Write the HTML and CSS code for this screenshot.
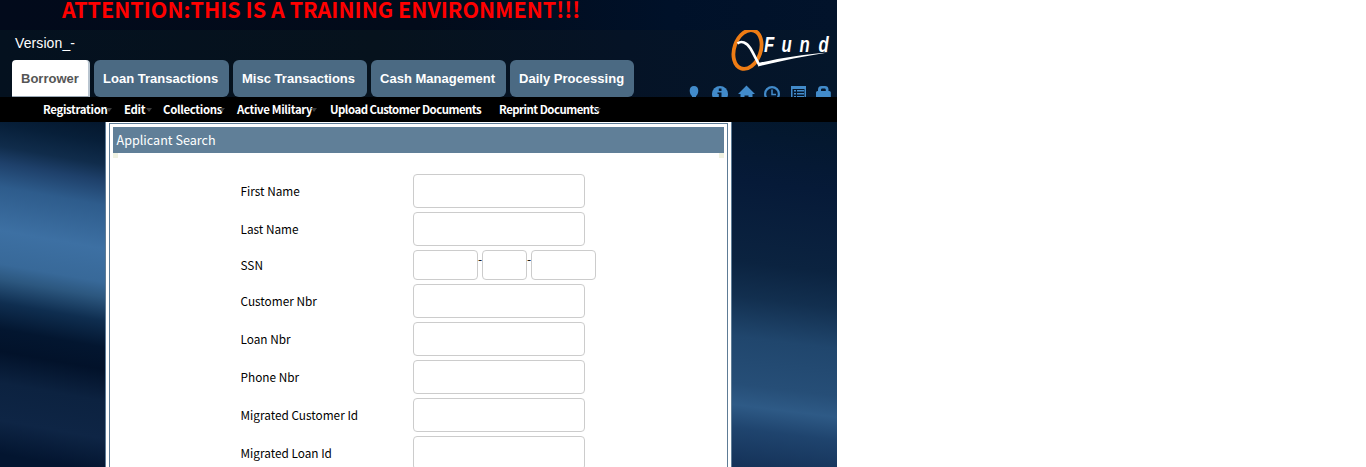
FILE: index.html
```html
<!DOCTYPE html>
<html lang="en">
<head>
<meta charset="utf-8">
<title>QFund</title>
<link rel="stylesheet" href="styles.css">
</head>
<body>
<div class="app">
  <div class="notice"><span class="notice-text">ATTENTION:THIS IS A TRAINING ENVIRONMENT!!!</span></div>
  <header class="header">
    <div class="header-left">
      <div class="version">Version_-</div>
      <nav class="tabs">
        <a class="tab tab-borrower active">Borrower</a>
        <a class="tab tab-loan">Loan Transactions</a>
        <a class="tab tab-misc">Misc Transactions</a>
        <a class="tab tab-cash">Cash Management</a>
        <a class="tab tab-daily">Daily Processing</a>
      </nav>
    </div>
    <svg class="brand" width="157" height="67" viewBox="680 30 157 67">
      <ellipse cx="747.5" cy="49.5" rx="13.2" ry="20" transform="rotate(19 747.5 49.5)" fill="none" stroke="#ee7c14" stroke-width="3.8"/>
      <path d="M737.500 43.500C741.500 40.500 746.500 42.200 750.500 48.500C754 54.500 756.500 60 759.300 65" fill="none" stroke="#fff" stroke-width="2.600"/>
      <path d="M758.500 63C780 58 802 54.500 828 52.400C802 56.300 780 61 758 66.400Z" fill="#fff"/>
      <g class="brand-text">
        <text transform="translate(764 52) scale(.76 1)">F</text>
        <text transform="translate(781.500 52) scale(.76 1)">u</text>
        <text transform="translate(799.500 52) scale(.76 1)">n</text>
        <text transform="translate(818.500 52) scale(.76 1)">d</text>
      </g>
      <g fill="#428bca">
        <path d="M694 86c2.800 0 4.300 2 4.300 4.800 0 2.700-1.300 4.500-2.300 5.400V97h-4v-.8c-1-.9-2.300-2.700-2.300-5.400 0-2.800 1.500-4.800 4.300-4.800Z"/>
        <circle cx="720" cy="94" r="8"/>
        <path d="M746.500 85.500 755 94h-2.500v3h-4v-1.500h-4V97h-4v-3H738Z"/>
        <path fill-rule="evenodd" d="M791 86h15v11h-15ZM792.500 89v8h12v-8Z"/>
        <path d="M794 90h2v1.500h-2Zm3 0h7v1.500h-7Zm-3 3h2v1.500h-2Zm3 0h7v1.500h-7Zm-3 3h2v1h-2Zm3 0h7v1h-7Z"/>
        <path fill-rule="evenodd" d="M816 92.500q0-1.500 1.500-1.500h.5V89.500c0-2.500 1.500-3.500 3.500-3.500h3.500c2 0 3.500 1 3.500 3.500V91h.8q1.500 0 1.500 1.500V97H816Zm5-1.500h4.800v-1c0-1-.5-1.500-1.200-1.500h-2.400c-.7 0-1.200.5-1.200 1.500Z"/>
      </g>
      <path d="M718.800 88.500h2.700V91h-2.700ZM717.500 92.500h4V97h-2.700v-3h-1.300Z" fill="#04152a"/>
      <circle cx="772" cy="94" r="6.900" fill="none" stroke="#428bca" stroke-width="2.200"/>
      <path d="M772 89.500V94.500h4" fill="none" stroke="#428bca" stroke-width="1.500"/>
    </svg>
  </header>
  <nav class="menu">
    <a class="menu-item m-reg has-arrow">Registration</a>
    <a class="menu-item m-edit has-arrow">Edit</a>
    <a class="menu-item m-coll has-arrow">Collections</a>
    <a class="menu-item m-mil has-arrow">Active Military</a>
    <a class="menu-item m-upload">Upload Customer Documents</a>
    <a class="menu-item m-reprint has-arrow">Reprint Documents</a>
  </nav>
  <main class="content">
    <div class="side side-left"></div>
    <div class="panel-outer">
      <section class="panel">
        <h1 class="panel-title">Applicant Search</h1>
        <div class="corners"><i class="corner"></i><i class="corner"></i></div>
        <form class="form">
          <label class="label">First Name</label><input class="field">
          <label class="label">Last Name</label><input class="field">
          <label class="label">SSN</label>
          <div class="ssn"><input class="field"><span class="dash">-</span><input class="field field-mid"><span class="dash">-</span><input class="field"></div>
          <label class="label">Customer Nbr</label><input class="field">
          <label class="label">Loan Nbr</label><input class="field">
          <label class="label">Phone Nbr</label><input class="field">
          <label class="label">Migrated Customer Id</label><input class="field">
          <label class="label">Migrated Loan Id</label><input class="field">
        </form>
      </section>
    </div>
    <div class="side side-right"></div>
  </main>
</div>
</body>
</html>
```
FILE: styles.css
```css
* { box-sizing: border-box; }
body { margin: 0; height: 467px; overflow: hidden; background: #fff; font-family: "Noto Sans CJK SC", sans-serif; }
.app { width: 837px; height: 467px; overflow: hidden; display: flex; flex-direction: column; }

.notice { height: 30px; flex: none; padding-left: 62px; background: linear-gradient(90deg, #020a1b, #020b1a 50%, #001129 80%, #02132b); }
.notice-text { display: block; width: max-content; font-size: 21.5px; font-weight: 700; line-height: 18px; color: #f00; white-space: nowrap; }

.header { height: 67px; flex: none; display: flex; justify-content: space-between; background: linear-gradient(90deg, #04111f, #06121d 45%, #051326 75%, #04162b); }
.header-left { padding-left: 12px; font-family: "Liberation Sans", Arial, sans-serif; }
.version { height: 30px; padding: 5px 0 0 3px; font-size: 14px; line-height: 17px; letter-spacing: .1px; color: #fff; }
.tabs { display: flex; gap: 4px; }
.tab { height: 37px; padding-left: 9px; border-radius: 6px; background: #4b6a83; color: #fff; font-size: 13px; font-weight: 700; line-height: 37px; letter-spacing: .02px; white-space: nowrap; }
.tab.active { background: #fff; color: #555; border-radius: 4px 4px 0 0; border-right: 2px solid #b9c5d0; border-bottom: 1px solid #9aa8b5; }
.tab-borrower { width: 78px; }
.tab-loan { width: 135px; }
.tab-misc { width: 134px; }
.tab-cash { width: 135px; }
.tab-daily { width: 124px; }
.brand { flex: none; display: block; }
.brand-text { font: italic 700 22px "Liberation Sans", Arial, sans-serif; fill: #fff; }

.menu { height: 25px; flex: none; display: flex; padding-left: 43px; background: #000; }
.menu-item { position: relative; color: #fff; font-size: 11.4px; font-weight: 700; line-height: 25px; letter-spacing: -.33px; white-space: nowrap; }
.has-arrow::after { content: ""; position: absolute; top: 11px; right: var(--arrow-x); border: 3px solid transparent; border-top: 4px solid #3a3a3a; border-bottom: 0; }
.m-reg { width: 81px; --arrow-x: 12px; }
.m-edit { width: 39px; --arrow-x: 11px; }
.m-coll { width: 74px; --arrow-x: 12px; }
.m-mil { width: 93px; --arrow-x: 13px; }
.m-upload { width: 169px; letter-spacing: -.5px; }
.m-reprint { width: 102px; --arrow-x: 0; letter-spacing: -.5px; }

.content { flex: 1; display: flex; min-height: 0; }
.side { width: 105px; flex: none; }
.side-left { background: linear-gradient(190deg, #04172d 0, #071f39 20px, #102c4b 42px, #1e406a 58px, #2e5c8c 82px, #3d70a3 125px, #386999 158px, #2c577f 173px, #0f2e50 196px, #031630 222px, #02122a 244px, #0c2240 275px, #0e2545 312px, #031530 345px); }
.side-right { background: linear-gradient(187deg, #03172c 0, #061a38 70px, #0b2340 150px, #122f4f 185px, #20466d 225px, #264e77 272px, #2e5a86 293px, #1f446e 316px, #143157 356px); }
.panel-outer { flex: 1; padding: 1px 3px 0; background: #fff; border: 1px solid #5e7c96; border-top: 0; border-bottom: 0; }
.panel { height: 500px; padding: 3px 3px 0; border: 1px solid #5e7c96; }
.panel-title { margin: 0; height: 26px; padding-left: 3.5px; background: #607f98; color: #fff; font-size: 12.6px; font-weight: 400; line-height: 26px; }
.corners { height: 5px; display: flex; justify-content: space-between; }
.corner { width: 5px; height: 5px; background: #f0f2e2; }
.form { display: grid; grid-template-columns: 172.5px 183px; grid-template-rows: 34px 34px 30px repeat(5, 34px); row-gap: 4px; padding: 16px 0 0 127.5px; align-items: center; }
.label { font-size: 11.8px; line-height: 18px; color: #000; padding-bottom: 1px; }
.field { width: 172px; height: 34px; padding: 0; border: 1px solid #ccc; border-radius: 4px; background: #fff; }
.ssn { display: flex; height: 30px; }
.ssn .field { width: 65px; height: 30px; }
.ssn .field-mid { width: 45px; }
.dash { width: 4px; font-size: 12px; line-height: 18px; }
```
